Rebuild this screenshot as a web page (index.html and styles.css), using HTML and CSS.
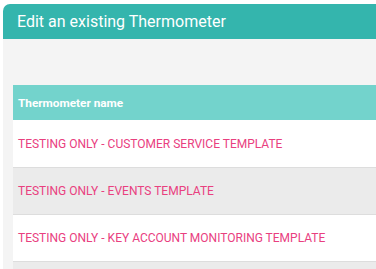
FILE: index.html
```html
<html>
<head>
<meta charset="utf-8">
<title>Edit an existing Thermometer</title>
<link rel="stylesheet" href="styles.css">
</head>
<body>

<div class="panel">
	<div class="panel_head">Edit an existing Thermometer</div>
	<div class="panel_body">
		<table class="list">
			<tr><th>Thermometer name</th></tr>
			<tr><td><a href="#">TESTING ONLY - CUSTOMER SERVICE TEMPLATE</a></td></tr>
			<tr class="odd"><td><a href="#">TESTING ONLY - EVENTS TEMPLATE</a></td></tr>
			<tr><td><a href="#">TESTING ONLY - KEY ACCOUNT MONITORING TEMPLATE</a></td></tr>
			<tr class="odd"><td><a href="#">&nbsp;</a></td></tr>
		</table>
	</div>
</div>

</body>
</html>
```

FILE: styles.css
```css
	body{
		margin: 0px;
		padding: 0px;
		background-color: #ffffff;
		font-family: Roboto, "Liberation Sans", sans-serif;
		overflow: hidden;
	}

	.panel{
		margin: 4px 0 0 3px;
		width: 700px;
	}

	/* 標題列 */
	.panel_head{
		height: 35px;
		line-height: 35px;
		padding-left: 14px;
		background-color: #34b5ad;
		border-radius: 7px 0 0 0;
		color: #ffffff;
		font-size: 16px;
	}

	.panel_body{
		background-color: #f4f4f4;
		padding: 46px 0 0 10px;
		height: 300px;
	}

	.list{
		border-collapse: collapse;
		width: 690px;
	}

	.list th{
		background-color: #73d3cc;
		color: #ffffff;
		font-size: 11.8px;
		font-weight: bold;
		text-align: left;
		height: 35px;
		padding: 0 5px;
	}

	.list td{
		background-color: #ffffff;
		height: 47px;
		padding: 1px 5px 0 5px;
		border-bottom: 1px solid #dddddd;
		font-size: 12px;
	}

	.list tr.odd td{
		background-color: #ebebeb;
	}

	.list a{
		color: #e9407f;
		text-decoration: none;
	}
```
